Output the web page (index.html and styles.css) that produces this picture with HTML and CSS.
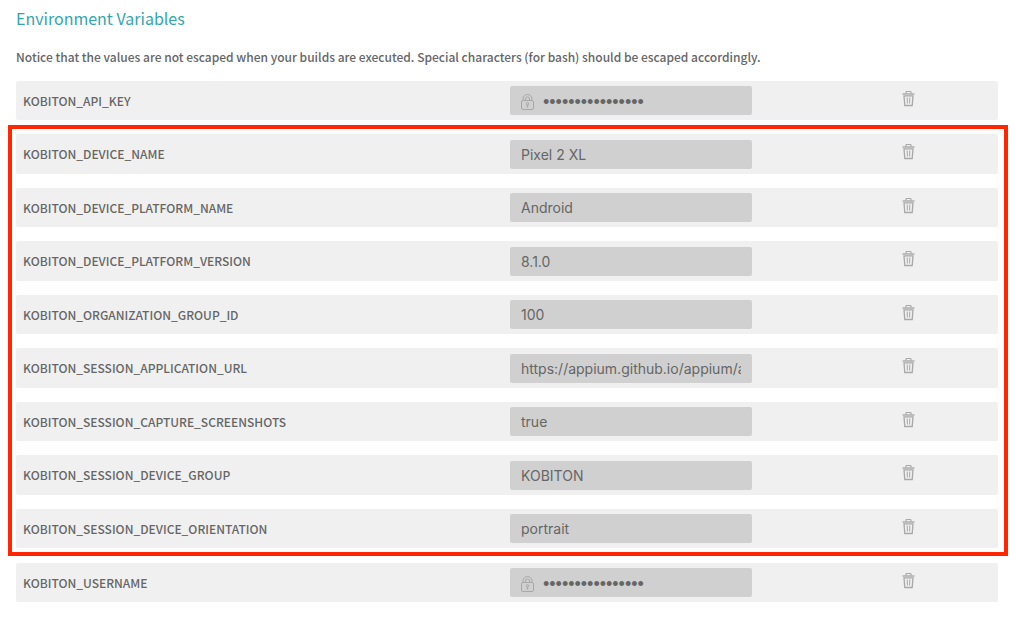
FILE: index.html
```
<!DOCTYPE html>
<html lang="en">
<head>
<meta charset="utf-8">
<meta name="viewport" content="width=device-width, initial-scale=1">
<title>Environment Variables</title>
<link rel="stylesheet" href="styles.css">
</head>
<body>
<svg class="sprite" aria-hidden="true">
  <symbol id="trash" viewBox="0 0 13 17">
    <path d="M4 3.5V2.2Q4 1.5 4.7 1.5h3.6q.7 0 .7.7V3.5" fill="none" stroke="currentColor" stroke-width="1.2"/>
    <path d="M0.5 4h12" fill="none" stroke="currentColor" stroke-width="1.4"/>
    <path d="M2 5.8h9l-.8 9.7H2.8z" fill="none" stroke="currentColor" stroke-width="1.3"/>
    <path d="M5.2 7.5l.2 6M7.8 7.5l-.2 6" fill="none" stroke="currentColor"/>
  </symbol>
  <symbol id="lock" viewBox="0 0 13 16">
    <rect x="0.5" y="6.5" width="12" height="9" rx="1.5" fill="none" stroke="currentColor"/>
    <path d="M2 6.5V5a4.5 4.5 0 0 1 9 0v1.5M4.5 6.5V5a2 2 0 0 1 4 0v1.5" fill="none" stroke="currentColor"/>
    <circle cx="6.5" cy="9.8" r="1.2" fill="none" stroke="currentColor"/>
    <path d="M6.5 11v2.5" fill="none" stroke="currentColor" stroke-width="1.4"/>
  </symbol>
</svg>
<main class="page">
  <h1 class="title">Environment Variables</h1>
  <p class="notice">Notice that the values are not escaped when your builds are executed. Special characters (for bash) should be escaped accordingly.</p>
  <div class="list">
    <div class="row">
      <label class="name" for="v0">KOBITON_API_KEY</label>
      <div class="field secret"><svg class="lock" aria-hidden="true"><use href="#lock"/></svg><input class="value" id="v0" type="password" value="0123456789abcdef" readonly></div>
      <button class="remove" type="button" aria-label="Remove KOBITON_API_KEY"><svg class="trash"><use href="#trash"/></svg></button>
    </div>
    <div class="group">
      <div class="row">
        <label class="name" for="v1">KOBITON_DEVICE_NAME</label>
        <div class="field"><input class="value" id="v1" type="text" value="Pixel 2 XL" readonly></div>
        <button class="remove" type="button" aria-label="Remove KOBITON_DEVICE_NAME"><svg class="trash"><use href="#trash"/></svg></button>
      </div>
      <div class="row">
        <label class="name" for="v2">KOBITON_DEVICE_PLATFORM_NAME</label>
        <div class="field"><input class="value" id="v2" type="text" value="Android" readonly></div>
        <button class="remove" type="button" aria-label="Remove KOBITON_DEVICE_PLATFORM_NAME"><svg class="trash"><use href="#trash"/></svg></button>
      </div>
      <div class="row">
        <label class="name" for="v3">KOBITON_DEVICE_PLATFORM_VERSION</label>
        <div class="field"><input class="value" id="v3" type="text" value="8.1.0" readonly></div>
        <button class="remove" type="button" aria-label="Remove KOBITON_DEVICE_PLATFORM_VERSION"><svg class="trash"><use href="#trash"/></svg></button>
      </div>
      <div class="row">
        <label class="name" for="v4">KOBITON_ORGANIZATION_GROUP_ID</label>
        <div class="field"><input class="value" id="v4" type="text" value="100" readonly></div>
        <button class="remove" type="button" aria-label="Remove KOBITON_ORGANIZATION_GROUP_ID"><svg class="trash"><use href="#trash"/></svg></button>
      </div>
      <div class="row">
        <label class="name" for="v5">KOBITON_SESSION_APPLICATION_URL</label>
        <div class="field"><input class="value" id="v5" type="text" value="https://appium.github.io/appium/assets" readonly></div>
        <button class="remove" type="button" aria-label="Remove KOBITON_SESSION_APPLICATION_URL"><svg class="trash"><use href="#trash"/></svg></button>
      </div>
      <div class="row">
        <label class="name" for="v6">KOBITON_SESSION_CAPTURE_SCREENSHOTS</label>
        <div class="field"><input class="value" id="v6" type="text" value="true" readonly></div>
        <button class="remove" type="button" aria-label="Remove KOBITON_SESSION_CAPTURE_SCREENSHOTS"><svg class="trash"><use href="#trash"/></svg></button>
      </div>
      <div class="row">
        <label class="name" for="v7">KOBITON_SESSION_DEVICE_GROUP</label>
        <div class="field"><input class="value" id="v7" type="text" value="KOBITON" readonly></div>
        <button class="remove" type="button" aria-label="Remove KOBITON_SESSION_DEVICE_GROUP"><svg class="trash"><use href="#trash"/></svg></button>
      </div>
      <div class="row">
        <label class="name" for="v8">KOBITON_SESSION_DEVICE_ORIENTATION</label>
        <div class="field"><input class="value" id="v8" type="text" value="portrait" readonly></div>
        <button class="remove" type="button" aria-label="Remove KOBITON_SESSION_DEVICE_ORIENTATION"><svg class="trash"><use href="#trash"/></svg></button>
      </div>
    </div>
    <div class="row">
      <label class="name" for="v9">KOBITON_USERNAME</label>
      <div class="field secret"><svg class="lock" aria-hidden="true"><use href="#lock"/></svg><input class="value" id="v9" type="password" value="0123456789abcdef" readonly></div>
      <button class="remove" type="button" aria-label="Remove KOBITON_USERNAME"><svg class="trash"><use href="#trash"/></svg></button>
    </div>
  </div>
</main>
</body>
</html>
```
FILE: styles.css
```
* {
  box-sizing: border-box;
}

body {
  margin: 0;
  background: #fff;
  color: #666;
  font-family: "Noto Sans CJK SC", "Noto Sans", sans-serif;
  font-size: 12px;
  font-weight: 500;
}

.sprite {
  display: none;
}

.page {
  padding: 7px 19px 16px 16px;
}

.title {
  margin: 0;
  color: #35a5ac;
  font-size: 16px;
  font-weight: 400;
  line-height: 22px;
}

.notice {
  margin: 18px 0 14px;
  line-height: 20px;
}

.list,
.group {
  display: flex;
  flex-direction: column;
  gap: 14px;
}

.group {
  position: relative;
  padding-bottom: 1px;
}

.group::after {
  content: "";
  position: absolute;
  inset: -9px -10px -7px -8px;
  border: 4px solid #ff2600;
  pointer-events: none;
}

.row {
  display: grid;
  grid-template-columns: minmax(0, 1fr) 242px 246px;
  align-items: center;
  min-height: 39px;
  padding-left: 7px;
  border-radius: 2px;
  background: #f0f0f0;
}

.group .row:nth-child(odd) {
  min-height: 40px;
}

.name {
  line-height: 20px;
}

.field {
  display: flex;
  align-items: center;
  height: 29px;
  padding: 0 11px;
  border-radius: 2px;
  background: #d0d0d0;
}

.value {
  flex: 1;
  min-width: 0;
  height: 100%;
  padding: 0;
  border: 0;
  outline: 0;
  background: transparent;
  color: #666;
  font: 400 14px Inter, Roboto, sans-serif;
}

.secret {
  gap: 9px;
}

.secret .value {
  padding-top: 4px;
  font: 400 18px "Liberation Sans", sans-serif;
}

.lock {
  flex: none;
  width: 13px;
  height: 16px;
  margin-top: 3px;
  color: #a8a8a8;
}

.remove {
  display: flex;
  justify-self: end;
  margin: 0 83px 5px 0;
  padding: 0;
  border: 0;
  background: none;
  color: #a8a8a8;
  cursor: pointer;
}

.trash {
  width: 13px;
  height: 17px;
}
```
